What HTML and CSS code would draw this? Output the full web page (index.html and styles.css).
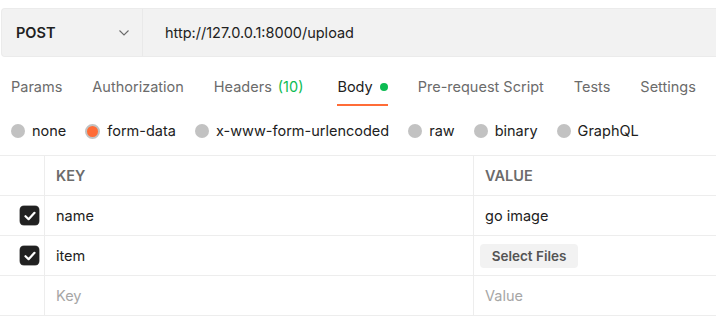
FILE: index.html
```html
<!DOCTYPE html>
<html>
<head>
<meta charset="utf-8">
<link rel="stylesheet" href="styles.css">
</head>
<body>
<div class="urlbar">
  <div class="method">
    <span class="method-name">POST</span>
    <svg class="chevron" width="10" height="6" viewBox="0 0 10 6"><path d="M0.5 0.5 L5 5 L9.5 0.5" fill="none" stroke="#6b6b6b" stroke-width="1.1"/></svg>
  </div>
  <div class="url">http://127.0.0.1:8000/upload</div>
</div>
<nav class="tabs">
  <span class="tab">Params</span>
  <span class="tab">Authorization</span>
  <span class="tab">Headers<span class="count">(10)</span></span>
  <span class="tab active">Body<span class="dot"></span></span>
  <span class="tab">Pre-request Script</span>
  <span class="tab">Tests</span>
  <span class="tab">Settings</span>
</nav>
<div class="radios">
  <label class="radio"><span class="circle"></span>none</label>
  <label class="radio"><span class="circle on"></span>form-data</label>
  <label class="radio"><span class="circle"></span>x-www-form-urlencoded</label>
  <label class="radio"><span class="circle"></span>raw</label>
  <label class="radio"><span class="circle"></span>binary</label>
  <label class="radio"><span class="circle"></span>GraphQL</label>
</div>
<div class="table">
  <div class="cell check head"></div>
  <div class="cell head">KEY</div>
  <div class="cell head last">VALUE</div>

  <div class="cell check"><span class="box"><svg width="12" height="10" viewBox="0 0 12 10"><path d="M1.5 5.2 L4.6 8.2 L10.5 1.8" fill="none" stroke="#fff" stroke-width="2.2" stroke-linecap="round" stroke-linejoin="round"/></svg></span></div>
  <div class="cell">name</div>
  <div class="cell last">go image</div>

  <div class="cell check"><span class="box"><svg width="12" height="10" viewBox="0 0 12 10"><path d="M1.5 5.2 L4.6 8.2 L10.5 1.8" fill="none" stroke="#fff" stroke-width="2.2" stroke-linecap="round" stroke-linejoin="round"/></svg></span></div>
  <div class="cell">item</div>
  <div class="cell last files"><span class="btn">Select Files</span></div>

  <div class="cell check"></div>
  <div class="cell ph">Key</div>
  <div class="cell last ph">Value</div>
</div>
</body>
</html>
```
FILE: styles.css
```css
html, body {
  margin: 0;
  padding: 0;
  background: #fff;
}
body {
  font-family: Inter, "Noto Sans", "Liberation Sans", sans-serif;
  font-size: 14.5px;
  color: #212121;
  width: 716px;
  overflow: hidden;
}
.urlbar {
  margin: 8px 0 0 1px;
  height: 47px;
  display: flex;
  background: #f2f2f2;
  border: 1px solid #ebebeb;
  border-right: none;
  border-radius: 4px 0 0 4px;
}
.method {
  width: 125px;
  padding-left: 14px;
  display: flex;
  align-items: center;
  justify-content: space-between;
  padding-right: 1px;
  border-right: 1px solid #e9e9e9;
}
.method-name {
  font-weight: 600;
  color: #212121;
}
.chevron {
  margin-right: 12px;
  margin-top: 1px;
}
.url {
  display: flex;
  align-items: center;
  padding-left: 22px;
  color: #212121;
}
.tabs {
  display: flex;
  padding-left: 11px;
  gap: 30px;
}
.tab {
  padding: 20px 0 7px;
  line-height: 20px;
  color: #6b6b6b;
  border-bottom: 2px solid transparent;
  white-space: nowrap;
  display: flex;
  align-items: center;
}
.tab:nth-child(4) {
  margin-left: 4px;
}
.tab .count {
  color: #0cbb52;
  margin-left: 6px;
}
.tab.active {
  color: #212121;
  border-bottom-color: #ff6c37;
}
.dot {
  width: 8px;
  height: 8px;
  border-radius: 50%;
  background: #0cbb52;
  margin-left: 7px;
}
.radios {
  display: flex;
  padding-left: 11px;
  margin-top: 16px;
  height: 18px;
  gap: 19px;
}
.radio {
  display: flex;
  align-items: center;
  gap: 7px;
  line-height: 18px;
  color: #212121;
}
.circle {
  width: 14px;
  height: 14px;
  border-radius: 50%;
  background: #c2c2c2;
  box-sizing: border-box;
}
.circle.on {
  background: #ff6c37;
  border: 2px solid #c2c2c2;
  width: 15px;
  height: 15px;
}
.table {
  margin-top: 15px;
  display: grid;
  grid-template-columns: 45px 429px 1fr;
  grid-auto-rows: 40px;
  border-top: 1px solid #ededed;
}
.cell {
  border-right: 1px solid #ededed;
  border-bottom: 1px solid #ededed;
  display: flex;
  align-items: center;
  padding-left: 11px;
  box-sizing: border-box;
}
.cell.last {
  border-right: none;
}
.cell.head {
  font-weight: 600;
  color: #6b6b6b;
}
.cell.check {
  padding-left: 20px;
}
.box {
  width: 19px;
  height: 19px;
  border-radius: 4px;
  background: #212121;
  display: flex;
  align-items: center;
  justify-content: center;
  box-shadow: 0 0 0 0.5px #555;
}
.cell.files {
  padding-left: 6px;
}
.btn {
  display: inline-block;
  width: 98px;
  height: 24px;
  line-height: 24px;
  text-align: center;
  background: #f2f2f2;
  border-radius: 4px;
  font-size: 13.5px;
  font-weight: 600;
  color: #545454;
}
.ph {
  color: #a6a6a6;
}
```
